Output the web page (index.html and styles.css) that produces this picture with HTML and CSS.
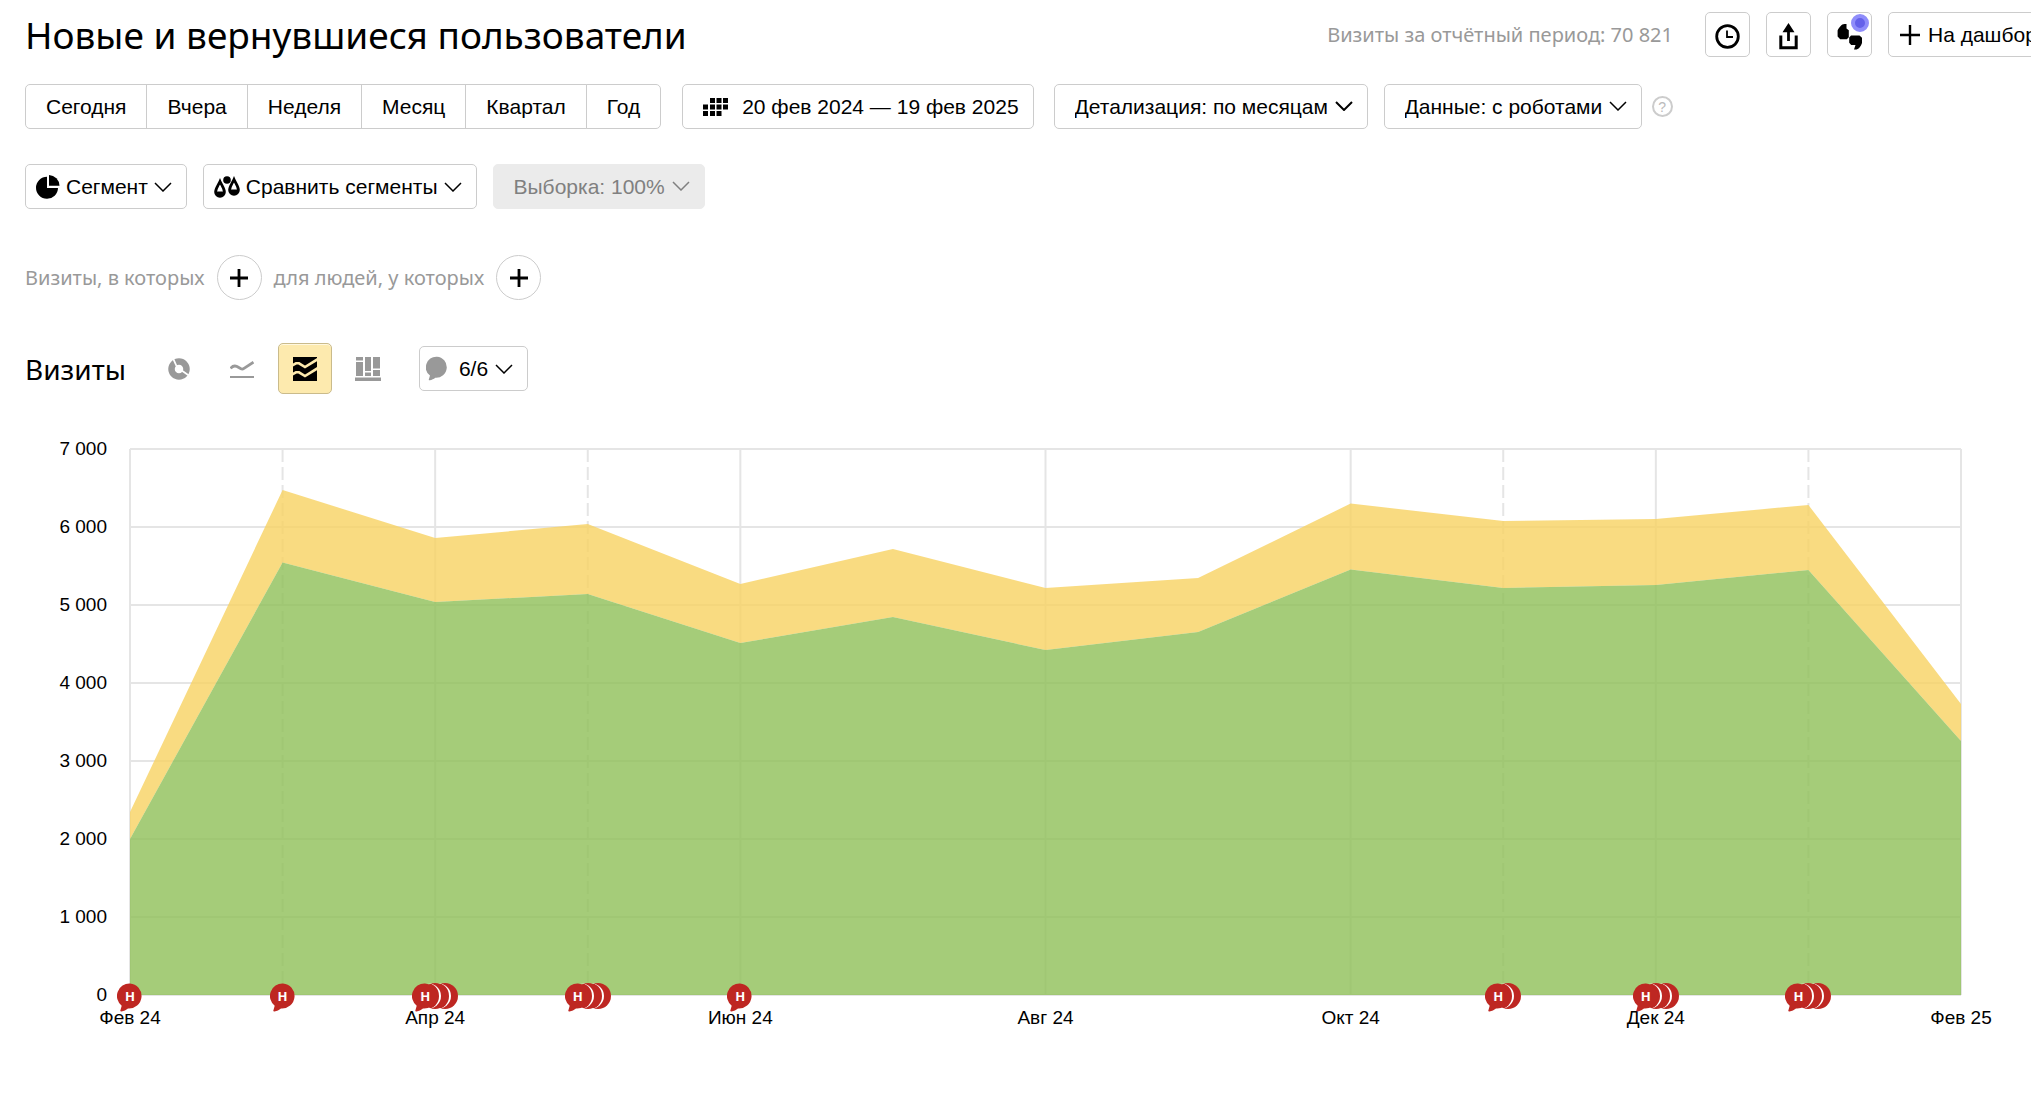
FILE: index.html
```html
<!DOCTYPE html>
<html lang="ru">
<head>
<meta charset="utf-8">
<meta name="viewport" content="width=device-width, initial-scale=1">
<title>Новые и вернувшиеся пользователи</title>
<link rel="stylesheet" href="styles.css">
</head>
<body>
<svg class="sprite" aria-hidden="true">
  <symbol id="chevron" viewBox="0 0 18 10"><path d="M1 1l8 8 8-8" fill="none" stroke="currentColor"/></symbol>
  <symbol id="bubble" viewBox="0 0 26 29"><path d="M13 .5a12.500 12.500 0 1 1-2 25c-2 1.500-4 2.600-6.500 3-1.200.1-1.500-.6-1-1.500l1.200-4.200A12.500 12.500 0 0 1 13 .5z" fill="currentColor"/></symbol>
</svg>
<main class="page">
  <header class="header">
    <h1 class="title">Новые и вернувшиеся пользователи</h1>
    <div class="actions">
      <p class="total">Визиты за отчётный период: 70 821</p>
      <button class="btn btn-icon" type="button" aria-label="История">
        <svg width="25" height="25" viewBox="0 0 25 25" fill="none" stroke="currentColor"><circle cx="12.500" cy="12.500" r="10.800" stroke-width="2.800"/><path d="M12 6.500v6.500h6" stroke-width="1.800"/></svg>
      </button>
      <button class="btn btn-icon" type="button" aria-label="Экспорт">
        <svg width="25" height="27" viewBox="0 0 25 27"><path d="M4.800 12.500v12.200h15.400V12.500" fill="none" stroke="currentColor" stroke-width="3"/><path d="M12.500 0l6 9.200h-4.600V18h-2.800V9.200H6.500z" fill="currentColor"/></svg>
      </button>
      <button class="btn btn-icon" type="button" aria-label="Обратная связь">
        <svg width="26" height="26" viewBox="0 0 26 26" fill="currentColor"><path d="M9.500 0v4.500l2.300 1.700v7l-2 2H3.200L.6 12.600V6.500C2 3.500 4.500 0 7.500 0zM14 11.500h8.500L25 13.800v5.200c-1 3.200-3 5.800-5.500 6.500H17l1.500-4.500h-4.300l-2-2.200v-5.200z"/></svg>
        <span class="dot"></span>
      </button>
      <button class="btn btn-dash" type="button">
        <svg width="20" height="20" viewBox="0 0 20 20" stroke="currentColor" stroke-width="2.400"><path d="M0 10h20M10 0v20"/></svg>На дашборд
      </button>
    </div>
  </header>

  <div class="row filters">
    <div class="group">
      <button type="button">Сегодня</button><button type="button">Вчера</button><button type="button">Неделя</button><button type="button">Месяц</button><button type="button">Квартал</button><button type="button">Год</button>
    </div>
    <button class="btn btn-date" type="button">
      <svg width="25" height="18" viewBox="0 0 25 18" fill="currentColor"><path d="M7 0h5v5H7zM13.500 0h5v5h-5zM20 0h5v5h-5zM0 6.500h5v5H0zM7 6.500h5v5H7zM13.500 6.500h5v5h-5zM20 6.500h5v5h-5zM0 13h5v5H0zM7 13h5v5H7zM13.500 13h5v5h-5z"/></svg>20 фев 2024 — 19 фев 2025
    </button>
    <span class="select select-detail">
      <select aria-label="Детализация"><option>Детализация: по месяцам</option><option>Детализация: по дням</option></select>
      <svg class="chevron bold"><use href="#chevron"/></svg>
    </span>
    <span class="select select-data">
      <select aria-label="Данные"><option>Данные: с роботами</option><option>Данные: люди</option></select>
      <svg class="chevron"><use href="#chevron"/></svg>
    </span>
    <button class="help" type="button" aria-label="Справка">?</button>
  </div>

  <div class="row segments">
    <button class="btn btn-segment" type="button">
      <svg width="24" height="24" viewBox="0 0 24 24" fill="currentColor"><path d="M11 1.800V13h11A11 11 0 1 1 11 1.800z"/><path d="M13 0a11 11 0 0 1 10.500 10.800H13z"/></svg>Сегмент<svg class="chevron"><use href="#chevron"/></svg>
    </button>
    <button class="btn btn-segment" type="button">
      <svg width="26" height="22" viewBox="0 0 26 22"><circle cx="13" cy="4" r="3.800" fill="currentColor"/><g fill="none" stroke="currentColor" stroke-width="2.800"><path d="M6 5.500C4.500 9 1.600 12.500 1.600 16a4.400 4.400 0 0 0 8.800 0C10.400 12.500 7.500 9 6 5.500z"/><path d="M20 3.500c-1.500 3.500-4.400 7-4.400 10.500a4.400 4.400 0 0 0 8.800 0c0-3.500-2.900-7-4.400-10.500z"/></g><path d="M2 15.500h8v4.500H3zM16 13.500h8v4.500h-7z" fill="currentColor"/></svg>Сравнить сегменты<svg class="chevron"><use href="#chevron"/></svg>
    </button>
    <span class="select select-sample">
      <select aria-label="Выборка" disabled><option>Выборка: 100%</option></select>
      <svg class="chevron"><use href="#chevron"/></svg>
    </span>
  </div>

  <div class="row conditions">
    <span>Визиты, в которых</span>
    <button class="round" type="button" aria-label="Добавить условие для визитов"><svg width="18" height="18" viewBox="0 0 18 18" stroke="currentColor" stroke-width="2.800"><path d="M0 9h18M9 0v18"/></svg></button>
    <span>для людей, у которых</span>
    <button class="round" type="button" aria-label="Добавить условие для людей"><svg width="18" height="18" viewBox="0 0 18 18" stroke="currentColor" stroke-width="2.800"><path d="M0 9h18M9 0v18"/></svg></button>
  </div>

  <div class="row chart-bar">
    <h2 class="subtitle">Визиты</h2>
    <div class="views">
      <button class="view" type="button" aria-label="Круговая"><svg width="24" height="24" viewBox="0 0 24 24"><circle cx="12" cy="12" r="7.500" fill="none" stroke="currentColor" stroke-width="6.500"/><path d="M5 -1l4.500 10M14 13l10 7" stroke="#fff" stroke-width="1.800"/></svg></button>
      <button class="view" type="button" aria-label="Линии"><svg width="24" height="22" viewBox="0 0 24 22" fill="none" stroke="currentColor" stroke-width="2.800"><path d="M.5 10.500c2-2.600 4-3.200 6.500-2l4 2.300c1 .5 2 .3 3-.4l9.500-6.200"/><path d="M0 19h24" stroke-width="2"/></svg></button>
      <button class="view active" type="button" aria-label="Области" aria-pressed="true"><svg width="24" height="24" viewBox="0 0 24 24"><path d="M0 0h24v24H0z" fill="currentColor"/><path d="M-1 8.500L3 6.300h3l6 3.700 13-8M-1 17.500l4-2.200h3l6 3.700 13-8" fill="none" stroke="#fdeaae" stroke-width="2.600"/></svg></button>
      <button class="view" type="button" aria-label="Колонки"><svg width="26" height="24" viewBox="0 0 26 24" fill="currentColor"><path d="M1 0h7v3.500H1zM1 5h7v14H1zM10 0h6v14h-6zM10 15.500h6V19h-6zM18 0h7v11.500h-7zM18 13h7v6h-7zM0 20.500h26V24H0z"/></svg></button>
    </div>
    <button class="btn btn-notes" type="button">
      <svg class="notes-icon" width="22" height="25"><use href="#bubble"/></svg>6/6<svg class="chevron"><use href="#chevron"/></svg>
    </button>
  </div>

  <section class="chart" aria-label="Визиты по месяцам">
    <div class="y-axis"><span>7 000</span><span>6 000</span><span>5 000</span><span>4 000</span><span>3 000</span><span>2 000</span><span>1 000</span><span>0</span></div>
    <div class="plot">
      <svg class="areas" viewBox="0 0 1200 7000" preserveAspectRatio="none">
        <path class="grid" d="M0 0H1200M0 1000H1200M0 2000H1200M0 3000H1200M0 4000H1200M0 5000H1200M0 6000H1200M0 7000H1200M0 0V7000M200 0V7000M400 0V7000M600 0V7000M800 0V7000M1000 0V7000M1200 0V7000"/>
        <path class="grid dashed" d="M100 0V7000M300 0V7000M900 0V7000M1100 0V7000"/>
        <path class="returning" d="M0 4655L100 526L200 1141L300 962L400 1731L500 1282L600 1782L700 1654L800 699L900 923L1000 897L1100 718L1200 3269V3744L1100 1551L1000 1744L900 1782L800 1545L700 2346L600 2577L500 2154L400 2487L300 1859L200 1962L100 1455L0 5000Z"/>
        <path class="new" d="M0 5000L100 1455L200 1962L300 1859L400 2487L500 2154L600 2577L700 2346L800 1545L900 1782L1000 1744L1100 1551L1200 3744V7000H0Z"/>
      </svg>
      <span class="x-label" style="left:0%">Фев 24</span>
      <span class="x-label" style="left:16.667%">Апр 24</span>
      <span class="x-label" style="left:33.333%">Июн 24</span>
      <span class="x-label" style="left:50%">Авг 24</span>
      <span class="x-label" style="left:66.667%">Окт 24</span>
      <span class="x-label" style="left:83.333%">Дек 24</span>
      <span class="x-label" style="left:100%">Фев 25</span>
      <span class="pin" style="left:0%"><b><svg><use href="#bubble"/></svg><i>Н</i></b></span>
      <span class="pin" style="left:8.333%"><b><svg><use href="#bubble"/></svg><i>Н</i></b></span>
      <span class="pin" style="left:16.667%"><b><svg><use href="#bubble"/></svg><i>Н</i></b><em></em><em></em></span>
      <span class="pin" style="left:25%"><b><svg><use href="#bubble"/></svg><i>Н</i></b><em></em><em></em></span>
      <span class="pin" style="left:33.333%"><b><svg><use href="#bubble"/></svg><i>Н</i></b></span>
      <span class="pin" style="left:75%"><b><svg><use href="#bubble"/></svg><i>Н</i></b><em></em></span>
      <span class="pin" style="left:83.333%"><b><svg><use href="#bubble"/></svg><i>Н</i></b><em></em><em></em></span>
      <span class="pin" style="left:91.667%"><b><svg><use href="#bubble"/></svg><i>Н</i></b><em></em><em></em></span>
    </div>
  </section>
</main>
</body>
</html>
```
FILE: styles.css
```css
* { box-sizing: border-box; }
body {
  margin: 0;
  background: #fff;
  color: #000;
  font: 21px/24px "Liberation Sans", Arial, sans-serif;
  overflow-x: hidden;
}
.sprite { position: absolute; width: 0; height: 0; }
button, select { font: inherit; color: inherit; cursor: pointer; }
svg { display: block; flex: none; }

.page { padding: 12px 0 40px 25px; }
.row { display: flex; align-items: center; }

.header { display: flex; align-items: center; justify-content: space-between; height: 45px; white-space: nowrap; }
.title { margin: 0; font: 400 37px/48px "Noto Sans", sans-serif; }
.actions { display: flex; align-items: center; gap: 16px; margin-right: -24px; }
.total { margin: 0 16px 0 0; color: #999; font: 20px/24px "Noto Sans", sans-serif; }

.btn {
  display: flex;
  align-items: center;
  height: 45px;
  padding: 0 20px;
  border: 1px solid #ccc;
  border-radius: 5px;
  background: #fff;
  white-space: nowrap;
}
.btn-icon { position: relative; justify-content: center; width: 45px; padding: 4px 0 0; }
.dot {
  position: absolute;
  top: 1px;
  right: 2px;
  width: 18px;
  height: 18px;
  border: 4px solid #8f8dfa;
  border-radius: 50%;
  background: #6461ea;
}
.btn-dash { gap: 8px; width: 167px; padding: 0 11px; }

.filters { margin-top: 27px; }
.group { display: flex; }
.group button {
  height: 45px;
  margin-left: -1px;
  padding: 0 20px;
  border: 1px solid #ccc;
  background: #fff;
}
.group button:first-child { margin-left: 0; border-radius: 5px 0 0 5px; }
.group button:last-child { border-radius: 0 5px 5px 0; }
.btn-date { gap: 14px; margin-left: 21px; padding-right: 14px; }

.chevron { width: 18px; height: 10px; stroke-width: 1.5px; }
.chevron.bold { stroke-width: 2px; }
.select { position: relative; display: block; }
.select select {
  width: 100%;
  height: 45px;
  padding: 0 38px 0 20px;
  border: 1px solid #ccc;
  border-radius: 5px;
  background: #fff;
  appearance: none;
}
.select .chevron { position: absolute; top: 17px; right: 15px; pointer-events: none; }
.select-detail { margin-left: 20px; }
.select-data { margin-left: 16px; }
.help {
  width: 21px;
  height: 21px;
  margin-left: 10px;
  padding: 0;
  border: 2px solid #ccc;
  border-radius: 50%;
  background: #fff;
  color: #bbb;
  font-size: 14px;
  line-height: 16px;
}

.segments { gap: 16px; margin-top: 35px; }
.btn-segment { gap: 6px; padding: 0 14px 0 10px; }
.select-sample { color: #808080; }
.select-sample select { border-color: #ebebeb; background: #ebebeb; color: #808080; opacity: 1; }

.conditions { margin-top: 46px; color: #999; font: 20px/24px "Noto Sans", sans-serif; }
.round {
  display: flex;
  align-items: center;
  justify-content: center;
  width: 45px;
  height: 45px;
  margin: 0 12px;
  padding: 0;
  border: 1px solid #ccc;
  border-radius: 50%;
  background: #fff;
  color: #000;
}

.chart-bar { margin-top: 43px; }
.subtitle { margin: 0; font: 400 28px/40px "Noto Sans", sans-serif; }
.views { display: flex; gap: 9px; margin: 0 24px 0 26px; }
.view {
  display: flex;
  align-items: center;
  justify-content: center;
  width: 54px;
  height: 51px;
  padding: 0;
  border: 1px solid transparent;
  border-radius: 5px;
  background: none;
  color: #999;
}
.view.active { border-color: #cabb8b; background: #fdeaae; color: #000; box-shadow: inset 0 1px #fff8e0; }
.btn-notes { padding: 0 14px 0 6px; }
.notes-icon { margin-right: 11px; color: #999; }
.btn-notes .chevron { margin-left: 7px; }

.chart { display: flex; gap: 23px; margin: 55px 70px 0 0; font-size: 19px; line-height: 22px; }
.y-axis {
  display: flex;
  flex-direction: column;
  justify-content: space-between;
  flex: none;
  width: 82px;
  margin: -11px 0 29px;
  text-align: right;
}
.plot { position: relative; flex: 1; height: 546px; margin-bottom: 40px; }
.areas { width: 100%; height: 100%; overflow: visible; }
.grid { fill: none; stroke: #e5e5e5; stroke-width: 2px; vector-effect: non-scaling-stroke; }
.dashed { stroke-dasharray: 13 5; }
.returning { fill: #f7d262; fill-opacity: .8; }
.new { fill: #8ebf57; fill-opacity: .8; }
.x-label { position: absolute; top: 100%; margin-top: 12px; transform: translateX(-50%); white-space: nowrap; }
.pin { position: absolute; top: 100%; display: flex; margin-top: -12px; transform: translateX(-50%); }
.pin b { position: relative; z-index: 3; width: 26px; height: 29px; color: #be2722; }
.pin svg { width: 26px; height: 29px; }
.pin i {
  position: absolute;
  inset: 0;
  color: #fff;
  font: 700 13px/26px "Noto Sans", sans-serif;
  text-align: center;
}
.pin em {
  position: relative;
  z-index: 2;
  width: 26px;
  height: 26px;
  margin-left: -16px;
  border-radius: 50%;
  background: #be2722;
}
.pin em + em { z-index: 1; }
.pin em::before {
  content: "";
  position: absolute;
  top: 0;
  left: -9px;
  width: 26px;
  height: 26px;
  border-right: 2px solid #fff;
  border-radius: 50%;
}
```
